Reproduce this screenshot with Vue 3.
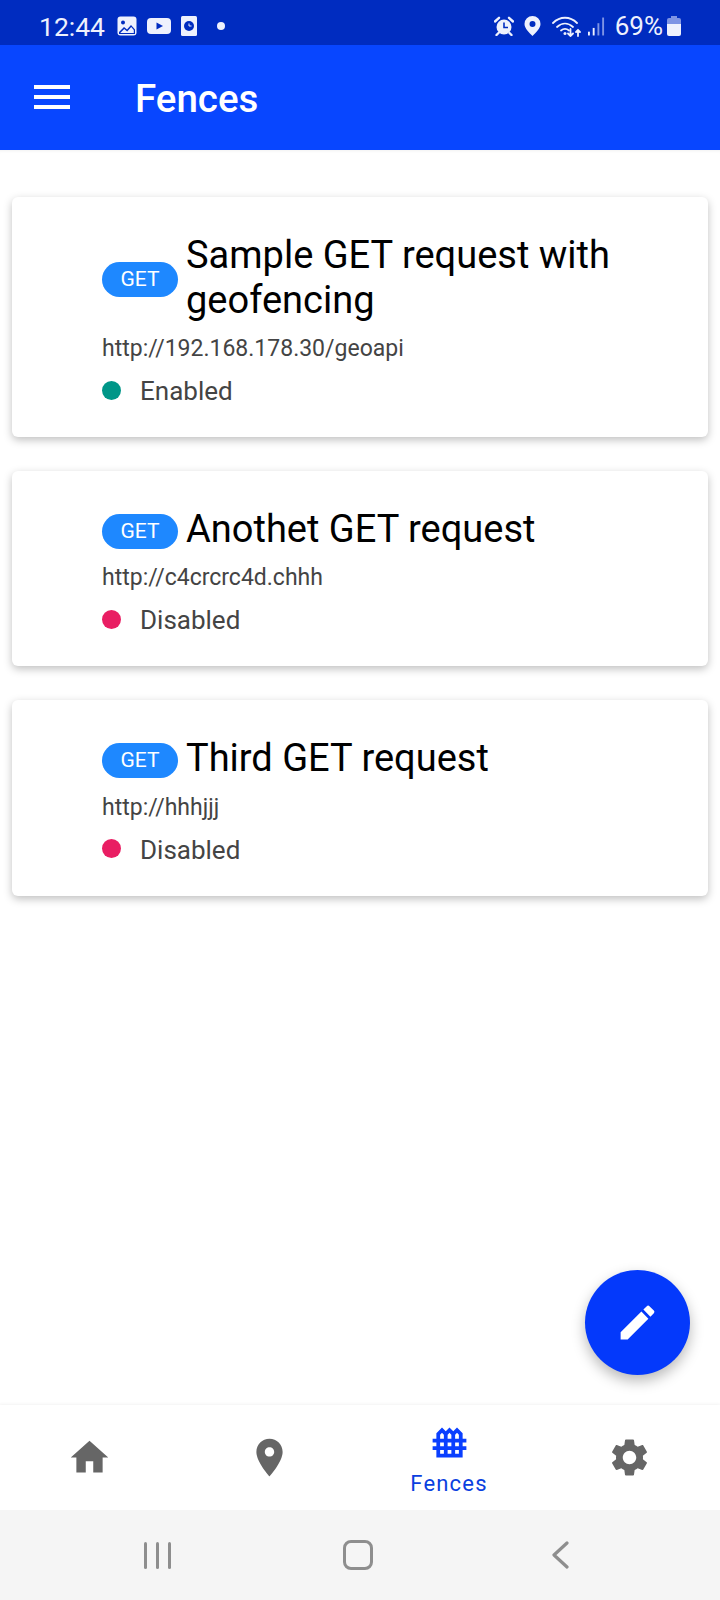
<script setup>
const cards = [
  { title: 'Sample GET request with geofencing', url: 'http://192.168.178.30/geoapi', enabled: true },
  { title: 'Anothet GET request', url: 'http://c4crcrc4d.chhh', enabled: false },
  { title: 'Third GET request', url: 'http://hhhjjj', enabled: false }
]
</script>

<template>
  <div class="screen">
    <div class="status">
      <span class="time">12:44</span>
      <svg class="si img" viewBox="0 0 20 20"><rect x="0.5" y="0.5" width="19" height="19" rx="3" fill="#eef1fd"/><circle cx="6" cy="6.5" r="2" fill="#002cc0"/><path d="M2 16l5-5 3 2.5 4-4.5 4 4.5v4.5H2z" fill="#002cc0"/><path d="M3.2 17l4-4 3 2.5 4-4.5 2.6 3v3z" fill="#eef1fd"/></svg>
      <svg class="si play" viewBox="0 0 24 16"><rect width="24" height="16" rx="4" fill="#eef1fd"/><path d="M9.5 4.5l6.5 3.5-6.5 3.5z" fill="#002cc0"/></svg>
      <svg class="si clock" viewBox="0 0 16 20"><rect width="16" height="20" rx="1.5" fill="#eef1fd"/><circle cx="8" cy="10" r="5" fill="#002cc0"/><path d="M8 7.5V10h2.5" fill="none" stroke="#eef1fd" stroke-width="1"/></svg>
      <span class="dot"></span>
      <span class="grow"></span>
      <svg class="si alarm" viewBox="0 0 20 20"><circle cx="10" cy="11" r="7.5" fill="#eef1fd"/><path d="M1 5.5L5 1.8M19 5.5L15 1.8M4.5 17l-2 2M15.500 17l2 2" stroke="#eef1fd" stroke-width="2.400" stroke-linecap="round"/><path d="M10 6.500V11.500h4" fill="none" stroke="#002cc0" stroke-width="1.600"/></svg>
      <svg class="si pin" viewBox="0 0 16 20"><path fill-rule="evenodd" d="M8 0a8 8 0 0 1 8 8c0 4.500-5 9-8 12-3-3-8-7.500-8-12a8 8 0 0 1 8-8zm0 5a3 3 0 1 0 0 6 3 3 0 0 0 0-6z" fill="#eef1fd"/></svg>
      <svg class="si wifi" viewBox="0 0 30 21"><g fill="none" stroke="#eef1fd" stroke-width="1.800" stroke-linecap="round"><path d="M1 7C8 0 18 0 25 7"/><path d="M5 11c5-4.500 11-4.500 16 0"/><path d="M9 14.500c2.500-2 5.500-2 8 0"/><path d="M18.500 13v7M16 17.500l2.500 2.500 2.500-2.500"/><path d="M26 20v-6M24 16l2-2 2 2"/></g><circle cx="13" cy="17.500" r="1.500" fill="#eef1fd"/></svg>
      <svg class="si signal" viewBox="0 0 18 19"><rect x="0" y="15" width="2" height="4" fill="#eef1fd"/><rect x="5" y="11" width="2" height="8" fill="#eef1fd"/><rect x="10" y="6" width="2" height="13" fill="#7e94e4"/><rect x="15" y="0" width="2" height="19" fill="#7e94e4"/></svg>
      <span class="pct">69%</span>
      <svg class="si batt" viewBox="0 0 14 20"><path d="M4 0h6v2h2a2 2 0 0 1 2 2v5H0V4a2 2 0 0 1 2-2h2z" fill="#7e94e4"/><path d="M0 8h14v10a2 2 0 0 1-2 2H2a2 2 0 0 1-2-2z" fill="#eef1fd"/></svg>
    </div>

    <header class="bar">
      <div class="burger"><i></i><i></i><i></i></div>
      <h1>Fences</h1>
    </header>

    <main class="list">
      <article v-for="c in cards" :key="c.url" class="card">
        <div class="head">
          <span class="badge">GET</span>
          <div class="title">{{ c.title }}</div>
        </div>
        <div class="url">{{ c.url }}</div>
        <div class="state">
          <span class="led" :class="c.enabled ? 'on' : 'off'"></span>
          {{ c.enabled ? 'Enabled' : 'Disabled' }}
        </div>
      </article>
      <button class="fab" aria-label="Edit">
        <svg viewBox="0 0 24 24"><path d="M3 17.250V21h3.750L17.810 9.940l-3.750-3.750L3 17.250zM20.710 7.040c.39-.39.39-1.020 0-1.410l-2.340-2.340c-.39-.39-1.020-.39-1.410 0l-1.830 1.830 3.750 3.750 1.830-1.830z"/></svg>
      </button>
    </main>

    <nav class="tabs">
      <div class="tab">
        <svg viewBox="0 0 24 24"><path d="M10 20v-6h4v6h5v-8h3L12 3 2 12h3v8z"/></svg>
      </div>
      <div class="tab">
        <svg viewBox="0 0 24 24"><path d="M12 2C8.130 2 5 5.130 5 9c0 5.250 7 13 7 13s7-7.750 7-13c0-3.870-3.130-7-7-7zm0 9.500c-1.380 0-2.500-1.120-2.500-2.500s1.120-2.500 2.500-2.500 2.500 1.120 2.500 2.500-1.120 2.500-2.500 2.500z"/></svg>
      </div>
      <div class="tab active">
        <svg viewBox="0 0 24 24"><path d="M21 12v-2h-2V7l-3-3-2 2-2-2-2 2-2-2-3 3v3H3v2h2v2H3v2h2v4h14v-4h2v-2h-2v-2h2zM16 6.830l1 1V10h-2V7.830l.41-.41.59-.59zM12 6.830l.59.59.41.41V10h-2V7.830l.41-.41.59-.59zM11 14v-2h2v2h-2zM13 16v2h-2v-2h2zM7 7.830l1-1 .59.59.41.41V10H7V7.830zM7 12h2v2H7v-2zM7 16h2v2H7v-2zM17 18h-2v-2h2v2zM17 14h-2v-2h2v2z"/></svg>
        <span>Fences</span>
      </div>
      <div class="tab">
        <svg viewBox="0 0 24 24"><path d="M19.140 12.940c.04-.3.060-.61.060-.94 0-.32-.02-.64-.07-.94l2.030-1.580c.18-.14.23-.41.120-.61l-1.920-3.320c-.12-.22-.37-.29-.59-.22l-2.390.96c-.5-.38-1.030-.7-1.620-.94l-.36-2.540c-.04-.24-.24-.41-.48-.41h-3.840c-.24 0-.43.170-.47.410l-.36 2.540c-.59.240-1.130.570-1.620.94l-2.390-.96c-.22-.08-.47 0-.59.220L2.740 8.870c-.12.210-.08.470.12.610l2.030 1.580c-.05.300-.09.630-.09.940s.02.640.07.940l-2.030 1.580c-.18.140-.23.410-.12.610l1.920 3.320c.12.220.37.290.59.220l2.390-.96c.5.380 1.030.7 1.620.94l.36 2.540c.05.240.24.410.48.410h3.840c.24 0 .44-.17.470-.41l.36-2.540c.59-.24 1.130-.56 1.620-.94l2.390.96c.22.080.47 0 .59-.22l1.920-3.320c.12-.22.070-.47-.12-.61l-2.010-1.580zM12 15.600c-1.980 0-3.600-1.620-3.600-3.600s1.620-3.600 3.600-3.600 3.600 1.620 3.600 3.600-1.620 3.600-3.600 3.600z"/></svg>
      </div>
    </nav>

    <footer class="sys">
      <div class="recents"><i></i><i></i><i></i></div>
      <div class="homeb"></div>
      <svg class="back" viewBox="0 0 18 28"><path d="M16 2L3 14l13 12" fill="none" stroke="#8e8e8e" stroke-width="3.200" stroke-linecap="round" stroke-linejoin="round"/></svg>
    </footer>
  </div>
</template>

<style>
html, body { margin: 0; background: #fff; }
</style>

<style scoped>
.screen {
  width: 720px;
  height: 1600px;
  display: flex;
  flex-direction: column;
  font-family: Roboto, "Liberation Sans", sans-serif;
  background: #fff;
  overflow: hidden;
}
.status {
  height: 45px;
  flex: none;
  background: #002cc0;
  display: flex;
  align-items: center;
  padding: 7px 39px 0 39px;
  color: #eef1fd;
  box-sizing: border-box;
}
.time { font-size: 26.5px; width: 78px; flex: none; }
.si { flex: none; display: block; }
.img { width: 20px; height: 20px; margin-right: 10px; }
.play { width: 24px; height: 16px; margin-right: 10px; }
.clock { width: 16px; height: 20px; margin-right: 20px; }
.dot { width: 8px; height: 8px; border-radius: 50%; background: #eef1fd; }
.grow { flex: 1; }
.alarm { width: 20px; height: 20px; margin-right: 10px; }
.pin { width: 17px; height: 20px; margin-right: 11px; }
.wifi { width: 30px; height: 21px; margin-right: 6px; }
.signal { width: 17px; height: 19px; margin-right: 10px; }
.pct { font-size: 26px; margin-right: 4px; }
.batt { width: 14px; height: 20px; }

.bar {
  height: 105px;
  flex: none;
  background: #0846ff;
  display: flex;
  align-items: center;
  color: #fff;
}
.burger { width: 36px; margin: 0 0 1px 34px; display: flex; flex-direction: column; gap: 6px; }
.burger i { display: block; height: 4px; background: #fff; }
h1 { margin: 3px 0 0 65px; font-size: 38.5px; font-weight: 500; line-height: 1; }

.list {
  position: relative;
  flex: 1;
  padding: 47px 12px 0;
  display: flex;
  flex-direction: column;
  gap: 33.75px;
  box-shadow: inset 0 3px 3px -2px rgba(0,0,0,.06);
}
.card {
  background: #fff;
  border-radius: 6px;
  padding: 36px 60px 30px 90px;
  box-shadow: 0 3px 8px rgba(0,0,0,.25);
  box-sizing: border-box;
}
.head { display: flex; align-items: center; gap: 8px; }
.title { font-size: 38px; line-height: 44.5px; color: #000; }
.badge {
  flex: none;
  width: 76px;
  height: 35px;
  line-height: 35px;
  margin-top: 4px;
  border-radius: 18px;
  background: #1e88ff;
  color: #fff;
  font-size: 21px;
  text-align: center;
}
.url { font-size: 23px; line-height: 30px; color: #444; margin-top: 12px; }
.state { display: flex; align-items: center; font-size: 26px; line-height: 32px; color: #444; margin-top: 11px; }
.led { width: 19px; height: 19px; border-radius: 50%; margin: 0 19px 2px 0; }
.on { background: #009688; }
.off { background: #e91e63; }
.fab {
  position: absolute;
  right: 30px;
  bottom: 30px;
  width: 105px;
  height: 105px;
  border: 0;
  padding: 0;
  border-radius: 50%;
  background: #0439fb;
  display: flex;
  align-items: center;
  justify-content: center;
  box-shadow: 0 6px 14px rgba(0,0,0,.28);
}
.fab svg { width: 45px; height: 45px; fill: #fff; }

.tabs {
  height: 105px;
  flex: none;
  display: grid;
  grid-template-columns: repeat(4, 180px);
  margin-left: -1px;
  background: #fff;
  box-shadow: 0 -1px 3px rgba(0,0,0,.05);
}
.tab { display: flex; flex-direction: column; align-items: center; justify-content: center; color: #666; }
.tab svg { width: 45px; height: 45px; fill: #666; display: block; }
.tab.active { padding-top: 4px; box-sizing: border-box; }
.tab.active svg { fill: #0a3fff; margin-top: -1px; }
.tab span { font-size: 22px; line-height: 28px; letter-spacing: 1.2px; color: #0a3fe0; margin-top: 5px; }

.sys {
  height: 90px;
  flex: none;
  background: #f5f5f5;
  display: flex;
  align-items: center;
}
.recents { display: flex; gap: 9px; margin-left: 144px; }
.recents i { display: block; width: 3px; height: 27px; background: #8e8e8e; border-radius: 2px; }
.homeb { width: 24px; height: 24px; border: 3px solid #8e8e8e; border-radius: 8px; margin-left: 172px; }
.back { width: 18px; height: 28px; margin-left: 178px; }
</style>
